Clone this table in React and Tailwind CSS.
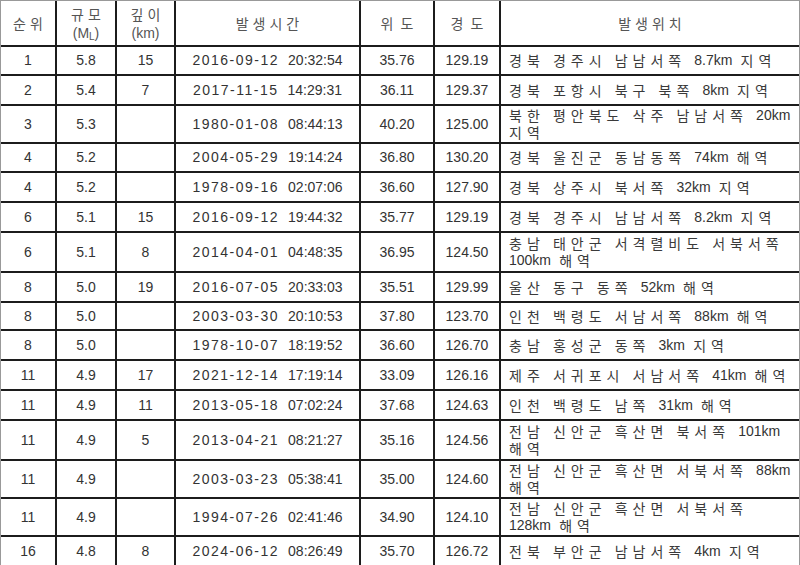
import React from "react";

const rows = [
  ["1", "5.8", "15", "2016-09-12", "20:32:54", "35.76", "129.19", ["경북 경주시 남남서쪽 8.7km 지역"], "h-[29px]"],
  ["2", "5.4", "7", "2017-11-15", "14:29:31", "36.11", "129.37", ["경북 포항시 북구 북쪽 8km 지역"], "h-[30px]"],
  ["3", "5.3", "", "1980-01-08", "08:44:13", "40.20", "125.00", ["북한 평안북도 삭주 남남서쪽 20km", "지역"], "h-[38px]"],
  ["4", "5.2", "", "2004-05-29", "19:14:24", "36.80", "130.20", ["경북 울진군 동남동쪽 74km 해역"], "h-[29px]"],
  ["4", "5.2", "", "1978-09-16", "02:07:06", "36.60", "127.90", ["경북 상주시 북서쪽 32km 지역"], "h-[30px]"],
  ["6", "5.1", "15", "2016-09-12", "19:44:32", "35.77", "129.19", ["경북 경주시 남남서쪽 8.2km 지역"], "h-[30px]"],
  ["6", "5.1", "8", "2014-04-01", "04:48:35", "36.95", "124.50", ["충남 태안군 서격렬비도 서북서쪽", "100km 해역"], "h-[40px]"],
  ["8", "5.0", "19", "2016-07-05", "20:33:03", "35.51", "129.99", ["울산 동구 동쪽 52km 해역"], "h-[30px]"],
  ["8", "5.0", "", "2003-03-30", "20:10:53", "37.80", "123.70", ["인천 백령도 서남서쪽 88km 해역"], "h-[28px]"],
  ["8", "5.0", "", "1978-10-07", "18:19:52", "36.60", "126.70", ["충남 홍성군 동쪽 3km 지역"], "h-[30px]"],
  ["11", "4.9", "17", "2021-12-14", "17:19:14", "33.09", "126.16", ["제주 서귀포시 서남서쪽 41km 해역"], "h-[30px]"],
  ["11", "4.9", "11", "2013-05-18", "07:02:24", "37.68", "124.63", ["인천 백령도 남쪽 31km 해역"], "h-[30px]"],
  ["11", "4.9", "5", "2013-04-21", "08:21:27", "35.16", "124.56", ["전남 신안군 흑산면 북서쪽 101km", "해역"], "h-[40px]"],
  ["11", "4.9", "", "2003-03-23", "05:38:41", "35.00", "124.60", ["전남 신안군 흑산면 서북서쪽 88km", "해역"], "h-[38px]"],
  ["11", "4.9", "", "1994-07-26", "02:41:46", "34.90", "124.10", ["전남 신안군 흑산면 서북서쪽", "128km 해역"], "h-[38px]"],
  ["16", "4.8", "8", "2024-06-12", "08:26:49", "35.70", "126.72", ["전북 부안군 남남서쪽 4km 지역"], "h-[30px]"],
];

// hangul runs get wide spacing, latin/digit runs stay tight
const KoLine = ({ text }) => (
  <div className="flex whitespace-pre h-[17px] leading-[17px]">
    {text.split(/([0-9A-Za-z.]+)/).map((part, i) =>
      i % 2 === 1 ? (
        <span key={i} className="font-['Liberation_Sans'] text-[14px] text-[#333]">
          {part}
        </span>
      ) : (
        <span key={i} className="tracking-[5px]">
          {part}
        </span>
      )
    )}
  </div>
);

const Head = ({ children }) => (
  <span className="tracking-[4px] -mr-[4px]">{children}</span>
);

const cell = "flex items-center justify-center border-r-2 border-[#1c1c1c] shrink-0";

export default function App() {
  return (
    <div className="w-[800px] h-[565px] overflow-hidden bg-white font-['Liberation_Sans','Noto_Sans_CJK_KR',sans-serif] text-[14px] text-[#333]">
      <div className="border-t border-l border-r border-[#999]">
        {/* header */}
        <div className="flex h-[46px] border-b-2 border-[#1c1c1c] text-[14px] text-[#555] font-['Noto_Sans_CJK_KR',sans-serif] leading-[17px]">
          <div className={`${cell} w-[56px]`}>
            <Head>순위</Head>
          </div>
          <div className={`${cell} w-[60px] flex-col gap-[3px]`}>
            <Head>규모</Head>
            <span className="font-['Liberation_Sans'] text-[14px] leading-[15px]">
              (M<sub className="text-[10px]">L</sub>)
            </span>
          </div>
          <div className={`${cell} w-[59px] flex-col gap-[3px]`}>
            <Head>깊이</Head>
            <span className="font-['Liberation_Sans'] text-[14px] leading-[15px]">(km)</span>
          </div>
          <div className={`${cell} w-[185px]`}>
            <Head>발생시간</Head>
          </div>
          <div className={`${cell} w-[74px]`}>
            <span className="tracking-[7px] -mr-[7px]">위도</span>
          </div>
          <div className={`${cell} w-[66px]`}>
            <span className="tracking-[7px] -mr-[7px]">경도</span>
          </div>
          <div className="flex flex-1 items-center justify-center">
            <Head>발생위치</Head>
          </div>
        </div>

        {rows.map((r, idx) => (
          <div key={idx} className={`flex ${r[8]} border-b-2 border-[#1c1c1c]`}>
            <div className={`${cell} w-[56px]`}>{r[0]}</div>
            <div className={`${cell} w-[60px]`}>{r[1]}</div>
            <div className={`${cell} w-[59px]`}>{r[2]}</div>
            <div className={`${cell} w-[185px] whitespace-pre`}>
              <span className="tracking-[1.5px]">{r[3]}</span>
              <span className="ml-[9px]">{r[4]}</span>
            </div>
            <div className={`${cell} w-[74px]`}>{r[5]}</div>
            <div className={`${cell} w-[66px]`}>{r[6]}</div>
            <div className="flex flex-1 flex-col justify-center pl-[8px] font-['Noto_Sans_CJK_KR',sans-serif] text-[14px] text-[#3a3a3a]">
              {r[7].map((line, j) => (
                <KoLine key={j} text={line} />
              ))}
            </div>
          </div>
        ))}
      </div>
    </div>
  );
}
